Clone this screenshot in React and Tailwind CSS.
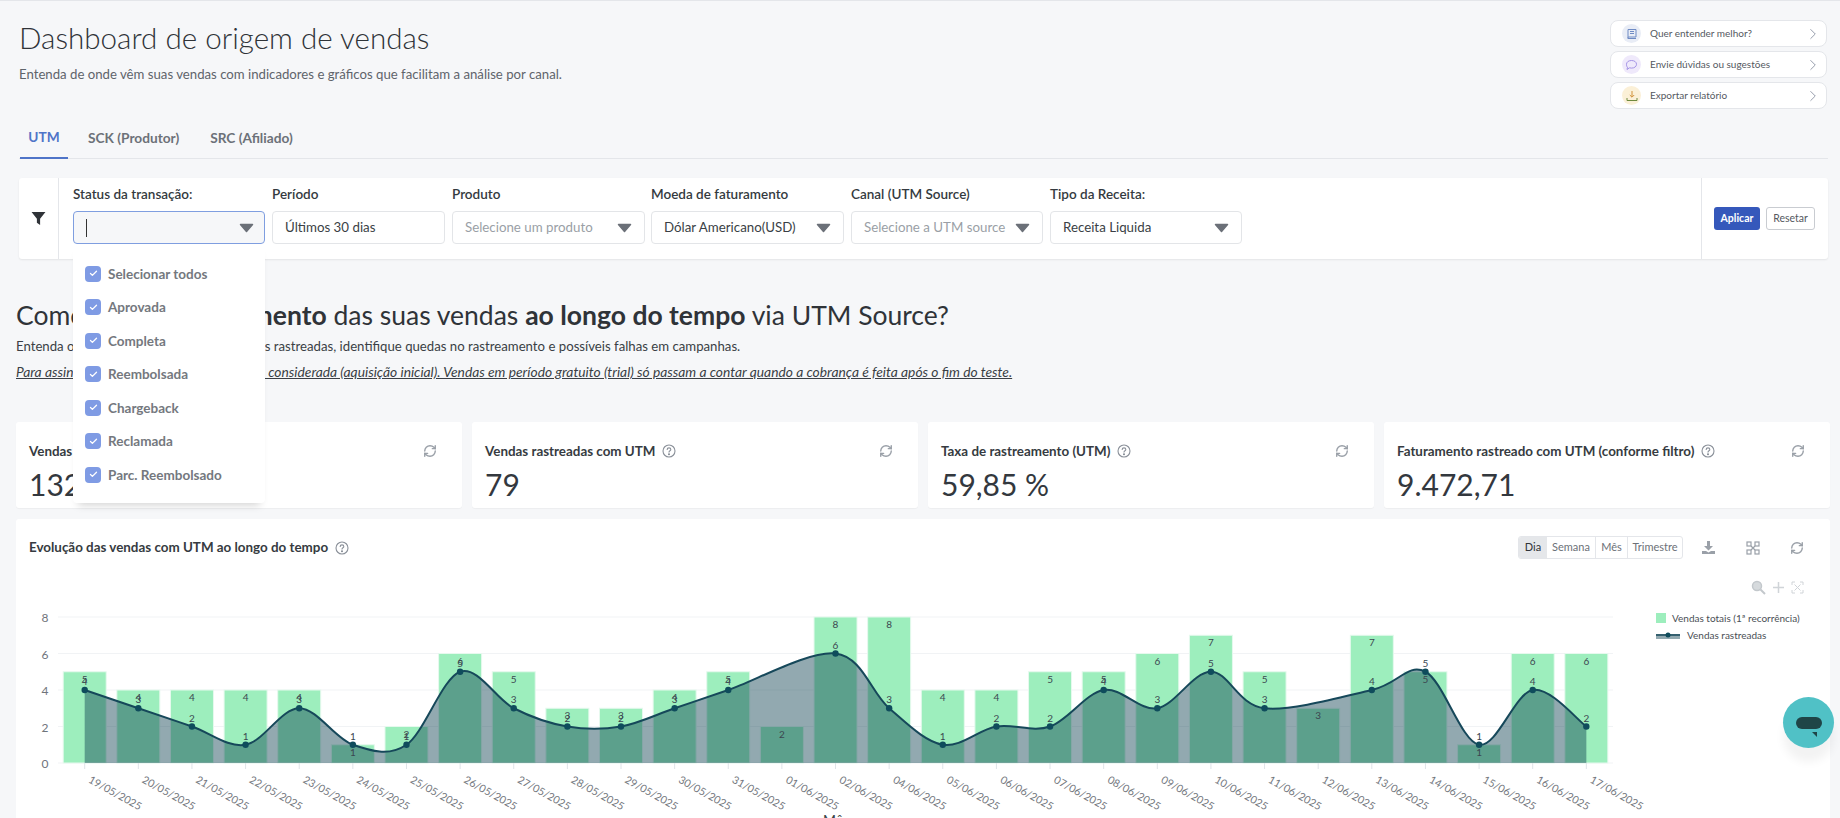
import { RefreshCw, ChevronRight, Check } from 'lucide-react'

const font = "font-['Lato','Noto_Sans',sans-serif]"

const dates = ['19/05/2025','20/05/2025','21/05/2025','22/05/2025','23/05/2025','24/05/2025','25/05/2025','26/05/2025','27/05/2025','28/05/2025','29/05/2025','30/05/2025','31/05/2025','01/06/2025','02/06/2025','04/06/2025','05/06/2025','06/06/2025','07/06/2025','08/06/2025','09/06/2025','10/06/2025','11/06/2025','12/06/2025','13/06/2025','14/06/2025','15/06/2025','16/06/2025','17/06/2025']
const totals = [5,4,4,4,4,1,2,6,5,3,3,4,5,2,8,8,4,4,5,5,6,7,5,3,7,5,1,6,6]
const tracked = [4,3,2,1,3,1,1,5,3,2,2,3,4,null,6,3,1,2,2,4,3,5,3,null,4,5,1,4,2]

const statusOptions = ['Selecionar todos','Aprovada','Completa','Reembolsada','Chargeback','Reclamada','Parc. Reembolsado']

const xAt = i => 84.7 + i * 53.63
const yAt = v => 763 - v * 18.25

function splinePath(points) {
  let d = `M${points[0].x} ${points[0].y}`
  for (let i = 0; i < points.length - 1; i++) {
    const p0 = points[i - 1] || points[i]
    const p1 = points[i]
    const p2 = points[i + 1]
    const p3 = points[i + 2] || p2
    const c1x = p1.x + (p2.x - p0.x) / 6
    const c1y = p1.y + (p2.y - p0.y) / 6
    const c2x = p2.x - (p3.x - p1.x) / 6
    const c2y = p2.y - (p3.y - p1.y) / 6
    d += ` C${c1x} ${c1y} ${c2x} ${c2y} ${p2.x} ${p2.y}`
  }
  return d
}

function Caret() {
  return (
    <svg width="15" height="10" viewBox="0 0 15 10" className="shrink-0">
      <path d="M1.5 1.5h12L7.5 8.5z" fill="#6b7078" stroke="#6b7078" strokeWidth="1.5" strokeLinejoin="round" />
    </svg>
  )
}

function HelpIcon() {
  return (
    <svg width="14" height="14" viewBox="0 0 14 14" fill="none" stroke="#8a9099" strokeWidth="1.1" className="shrink-0">
      <circle cx="7" cy="7" r="6" />
      <path d="M5.2 5.5c0-1 .8-1.6 1.8-1.6s1.8.6 1.8 1.5c0 1.3-1.8 1.3-1.8 2.7" strokeLinecap="round" />
      <circle cx="7" cy="10.2" r=".5" fill="#8a9099" />
    </svg>
  )
}

function Select({ width, label, value, placeholder, className = '' }) {
  return (
    <div className={`${width} ${className}`}>
      <div className="h-[33px] pt-[7px] text-[13.5px] font-semibold leading-[18px] text-[#343a40]">{label}</div>
      <div className="flex h-[33px] items-center justify-between rounded-[4px] border border-[#e3e5e8] bg-white pl-[12px] pr-[12px] pt-[1px] text-[13.3px]">
        <span className={placeholder ? 'text-[#9a9fa6]' : 'text-[#3a3f45]'}>{value || placeholder}</span>
        {value !== 'Últimos 30 dias' && <Caret />}
      </div>
    </div>
  )
}

function StatusSelect() {
  return (
    <div className="relative w-[192px]">
      <div className="h-[33px] pt-[7px] text-[13.5px] font-semibold leading-[18px] text-[#343a40]">Status da transação:</div>
      <div className="flex h-[33px] items-center justify-between rounded-[4px] border border-[#7f9ee0] bg-[#f6f7f9] pl-[12px] pr-[10px]">
        <span className="h-[18px] w-px bg-[#333]" />
        <Caret />
      </div>
      <div className="absolute left-0 top-[66px] z-10 flex h-[259px] w-full flex-col rounded-b-[4px] bg-white pl-[12px] pt-[13px] shadow-[0_7px_8px_-5px_rgba(0,0,0,0.18)]">
        {statusOptions.map(o => (
          <div key={o} className="flex h-[33.5px] shrink-0 items-center gap-[7px] text-[13.5px] font-bold text-[#74787e]">
            <span className="flex h-[16px] w-[16px] items-center justify-center rounded-[4px] bg-[#7f9be4]">
              <Check size={9} color="white" strokeWidth={3.5} />
            </span>
            {o}
          </div>
        ))}
      </div>
    </div>
  )
}

function HelpButton({ text, circle, children }) {
  return (
    <div className="flex h-[27px] items-center rounded-[8px] border border-[#e4e6ea] bg-white pl-[11px] pr-[4px]">
      <span className={`flex h-[19px] w-[19px] shrink-0 items-center justify-center rounded-full ${circle}`}>{children}</span>
      <span className="ml-[9px] flex-1 text-[10px] text-[#55595f]">{text}</span>
      <ChevronRight size={18} strokeWidth={1.2} color="#8b93a3" />
    </div>
  )
}

function StatCard({ label, value }) {
  return (
    <div className="rounded-[3px] bg-white pl-[13px] pr-[25px] pt-[19px] shadow-[0_1px_1px_rgba(0,0,0,0.04)]">
      <div className="flex items-center justify-between">
        <div className="flex items-center gap-[7px] text-[13.4px] font-bold text-[#363b41]">
          {label} <HelpIcon />
        </div>
        <RefreshCw size={14} color="#9aa0a8" strokeWidth={2.4} />
      </div>
      <div className="mt-[3px] text-[30px] leading-[40px] font-normal text-[#33383e]">{value}</div>
    </div>
  )
}

function SalesChart() {
  const points = tracked.map((v, i) => (v === null ? null : { x: xAt(i), y: yAt(v) })).filter(Boolean)
  const line = splinePath(points)
  const area = `${line} L${xAt(28)} 763 L${xAt(0)} 763 Z`

  return (
    <svg width="1630" height="218" viewBox="16 600 1630 218" className="block shrink-0">
      {[0, 2, 4, 6, 8].map(v => (
        <g key={v}>
          <line x1="58" x2="1613" y1={yAt(v)} y2={yAt(v)} stroke="#f1f3f5" />
          <text x="45" y={yAt(v) + 5} textAnchor="middle" fontSize="12" fill="#6f747b">{v}</text>
        </g>
      ))}
      {totals.map((v, i) => (
        <rect key={i} x={xAt(i) - 21.5} y={yAt(v)} width="43" height={v * 18.25} fill="#9deebd" stroke="#e6f9ee" strokeWidth="1" />
      ))}
      <path d={area} fill="#0d4050" fillOpacity="0.45" />
      <path d={line} fill="none" stroke="#16485a" strokeWidth="2" />
      {points.map(p => (
        <circle key={p.x} cx={p.x} cy={p.y} r="3.2" fill="#0f4c5c" />
      ))}
      {totals.map((v, i) => (
        <text key={i} x={xAt(i)} y={yAt(v) + 11} textAnchor="middle" fontSize="10" fill="#3b4650">{v}</text>
      ))}
      {tracked.map((v, i) =>
        v === null ? null : (
          <text key={i} x={xAt(i)} y={yAt(v) - 5} textAnchor="middle" fontSize="10" fill="#3b4650">{v}</text>
        )
      )}
      {dates.map((d, i) => (
        <g key={d}>
          <line x1={xAt(i)} x2={xAt(i)} y1="763" y2="769" stroke="#dfe4e8" />
          <text x={xAt(i) + 3} y="782" fontSize="10.6" fill="#74787e" transform={`rotate(29 ${xAt(i) + 3} 782)`}>{d}</text>
        </g>
      ))}
      <text x="836" y="825" textAnchor="middle" fontSize="14" fill="#3a3f45">Mês</text>
    </svg>
  )
}

export default function App() {
  return (
    <div className={`relative h-screen w-full overflow-hidden border-t border-[#e4e6ea] bg-[#f6f7f9] ${font}`}>
      {/* Header */}
      <div className="flex h-[119px] justify-between pl-[19px] pr-[13px] pt-[19px]">
        <div>
          <h1 className="-mt-[1px] text-[29.6px] leading-[38px] font-light text-[#2f3338]">Dashboard de origem de vendas</h1>
          <p className="mt-[8px] text-[13.2px] text-[#5f646b]">Entenda de onde vêm suas vendas com indicadores e gráficos que facilitam a análise por canal.</p>
        </div>
        <div className="flex w-[217px] flex-col gap-[4px]">
          <HelpButton text="Quer entender melhor?" circle="bg-[#e9edf6]">
            <svg width="12" height="12" viewBox="0 0 12 12" fill="none" stroke="#6f8bc4" strokeWidth="1"><path d="M2 10.5V1.5h8v7.5H3a1 1 0 0 0-1 1.5h8M4 3.5h4M4 5.5h4" /></svg>
          </HelpButton>
          <HelpButton text="Envie dúvidas ou sugestões" circle="bg-[#efe9fb]">
            <svg width="13" height="12" viewBox="0 0 13 12" fill="none" stroke="#a493e6" strokeWidth="1"><path d="M6.5 1.5c3 0 5 1.6 5 3.8s-2 3.8-5 3.8c-.7 0-1.4-.1-2-.3L2 10.5l.5-2.3C1.600 7.500 1.500 6.300 1.500 5.300c0-2.200 2-3.800 5-3.800z" /></svg>
          </HelpButton>
          <HelpButton text="Exportar relatório" circle="bg-[#fbf0d7]">
            <svg width="12" height="12" viewBox="0 0 12 12" fill="none" strokeWidth="1"><path d="M6 1v6M3.800 5 6 7.200 8.200 5" stroke="#d1923a" /><path d="M1 8v2.500h10V8" stroke="#6f8a3e" /></svg>
          </HelpButton>
        </div>
      </div>

      {/* Tabs */}
      <div className="ml-[19px] mr-[12px] flex h-[39px] items-center border-b border-[#e4e6ea] text-[13.7px] font-bold text-[#6c7178]">
        <div className="ml-[1px] flex h-[39px] w-[48px] items-center justify-center border-b-2 border-[#4f74c8] pb-[1px] text-[#4f74c8]">UTM</div>
        <div className="ml-[20px] pb-[1px]">SCK (Produtor)</div>
        <div className="ml-[31px] pb-[1px]">SRC (Afiliado)</div>
      </div>

      {/* Filters */}
      <div className="ml-[19px] mr-[12px] mt-[19px] flex h-[81px] rounded-[3px] bg-white shadow-[0_1px_2px_rgba(0,0,0,0.08)]">
        <div className="flex w-[40px] items-center justify-center border-r border-[#e4e6ea] pb-[1px]">
          <svg width="15" height="15" viewBox="0 0 14 14"><path d="M.5 1h13L8.500 7.200V13L5.500 11V7.200z" fill="#2f3338" /></svg>
        </div>
        <div className="flex flex-1 gap-[7px] pl-[14px]">
          <StatusSelect />
          <Select width="w-[173px]" label="Período" value="Últimos 30 dias" />
          <Select width="w-[193px]" label="Produto" placeholder="Selecione um produto" />
          <Select width="w-[193px]" className="-ml-[1px]" label="Moeda de faturamento" value="Dólar Americano(USD)" />
          <Select width="w-[192px]" label="Canal (UTM Source)" placeholder="Selecione a UTM source" />
          <Select width="w-[192px]" label="Tipo da Receita:" value="Receita Liquida" />
        </div>
        <div className="flex w-[127px] items-center gap-[6px] border-l border-[#e4e6ea] pl-[12px] text-[10.5px]">
          <button className="h-[23px] w-[46px] rounded-[3px] bg-[#3558bb] font-bold text-white">Aplicar</button>
          <button className="h-[23px] w-[49px] rounded-[3px] border border-[#c9ccd1] bg-white text-[#55595f]">Resetar</button>
        </div>
      </div>

      {/* Section heading */}
      <div className="pl-[16px] pt-[38px]">
        <h2 className="text-[26.5px] leading-[36px] text-[#2f3338]">
          Como está o <b>rastreamento</b> das suas vendas <b>ao longo do tempo</b> via UTM Source?
        </h2>
        <p className="mt-[3px] text-[13.2px] leading-[20px] text-[#3a3f45]">Entenda o total das vendas versus as vendas rastreadas, identifique quedas no rastreamento e possíveis falhas em campanhas.</p>
        <p className="mt-[6px] text-[13.8px] leading-[20px] italic underline text-[#3a3f45]">Para assinaturas, apenas a primeira venda é considerada (aquisição inicial). Vendas em período gratuito (trial) só passam a contar quando a cobrança é feita após o fim do teste.</p>
      </div>

      {/* Stat cards */}
      <div className="ml-[16px] mr-[10px] mt-[40px] grid h-[86px] grid-cols-4 gap-[10px]">
        <StatCard label="Vendas totais (1ª recorrência)" value="132" />
        <StatCard label="Vendas rastreadas com UTM" value="79" />
        <StatCard label="Taxa de rastreamento (UTM)" value="59,85 %" />
        <StatCard label="Faturamento rastreado com UTM (conforme filtro)" value="9.472,71" />
      </div>

      {/* Chart card */}
      <div className="ml-[16px] mr-[10px] mt-[11px] h-[320px] rounded-t-[3px] bg-white">
        <div className="flex h-[56px] items-start pl-[13px] pr-[26px] pt-[17px]">
          <div className="flex h-[23px] items-center gap-[7px] text-[13.4px] font-bold text-[#363b41]">
            Evolução das vendas com UTM ao longo do tempo <HelpIcon />
          </div>
          <div className="ml-auto flex h-[23px] overflow-hidden rounded-[3px] border border-[#e4e6ea] text-[11px] text-[#6c7178]">
            <div className="flex w-[28px] items-center justify-center bg-[#e5e7ea] text-[#2f3338]">Dia</div>
            <div className="flex w-[49px] items-center justify-center border-r border-[#e4e6ea]">Semana</div>
            <div className="flex w-[32px] items-center justify-center border-r border-[#e4e6ea]">Mês</div>
            <div className="flex w-[54px] items-center justify-center">Trimestre</div>
          </div>
          <div className="ml-[18px] flex h-[23px] items-center gap-[30px]">
            <svg width="15" height="15" viewBox="0 0 15 15" fill="#9aa0a8"><path d="M6 1h3v5h3L7.500 10.500 3 6h3z" /><path d="M1 11h4l2.500 1.500L10 11h4v3H1z" /></svg>
            <svg width="14" height="14" viewBox="0 0 14 14" fill="none" stroke="#9aa0a8" strokeWidth="1.2"><rect x="1" y="1" width="4" height="4" /><rect x="9" y="1" width="4" height="4" /><rect x="1" y="9" width="4" height="4" /><rect x="9" y="9" width="4" height="4" /><path d="M5 5l4 4M9 5L5 9" /></svg>
            <RefreshCw size={14} color="#9aa0a8" strokeWidth={2.4} />
          </div>
        </div>
        <div className="flex h-[25px] items-center justify-end gap-[6px] pr-[26px]">
          <svg width="15" height="15" viewBox="0 0 15 15" fill="none"><circle cx="6" cy="6" r="4.500" fill="#d6dadd" stroke="#c3c8cc" strokeWidth="1.500" /><path d="M9.500 9.500 14 14" stroke="#c3c8cc" strokeWidth="2" /></svg>
          <svg width="13" height="13" viewBox="0 0 13 13" fill="none" stroke="#d0d4d8" strokeWidth="1.500"><path d="M6.500 1v11M1 6.500h11" /></svg>
          <svg width="13" height="13" viewBox="0 0 13 13" fill="none" stroke="#d0d4d8" strokeWidth="1"><path d="M1 4V1h3M9 1h3v3M12 9v3H9M4 12H1V9M3.500 3.500l6 6M9.500 3.500l-6 6" /></svg>
        </div>
        <div className="flex">
          <SalesChart />
          <div className="ml-[10px] pt-[13px] text-[10px] text-[#4a4f55]">
            <div className="flex h-[10px] items-center gap-[6px] whitespace-nowrap">
              <span className="h-[10px] w-[10px] bg-[#9deebd]" />
              Vendas totais (1ª recorrência)
            </div>
            <div className="mt-[7px] flex h-[10px] items-center gap-[7px] whitespace-nowrap">
              <svg width="24" height="8" viewBox="0 0 24 8"><rect y="3" width="24" height="5" fill="#92a9b0" /><line y1="4" x2="24" y2="4" stroke="#16485a" strokeWidth="1.500" /><circle cx="12" cy="4" r="2.500" fill="#0f4c5c" /></svg>
              Vendas rastreadas
            </div>
          </div>
        </div>
      </div>

      {/* Chat widget */}
      <div className="absolute left-[1783px] top-[696px] flex h-[51px] w-[51px] items-center justify-center rounded-full bg-[#50c1c6] shadow-[0_14px_10px_rgba(0,0,0,0.05)]">
        <div className="relative h-[12px] w-[26px] rounded-[6px] bg-[#1f4547]">
          <span className="absolute -bottom-[8px] right-[5px] h-0 w-0 border-l-[5px] border-t-[5px] border-l-transparent border-t-[#1f4547]" />
        </div>
      </div>
    </div>
  )
}
